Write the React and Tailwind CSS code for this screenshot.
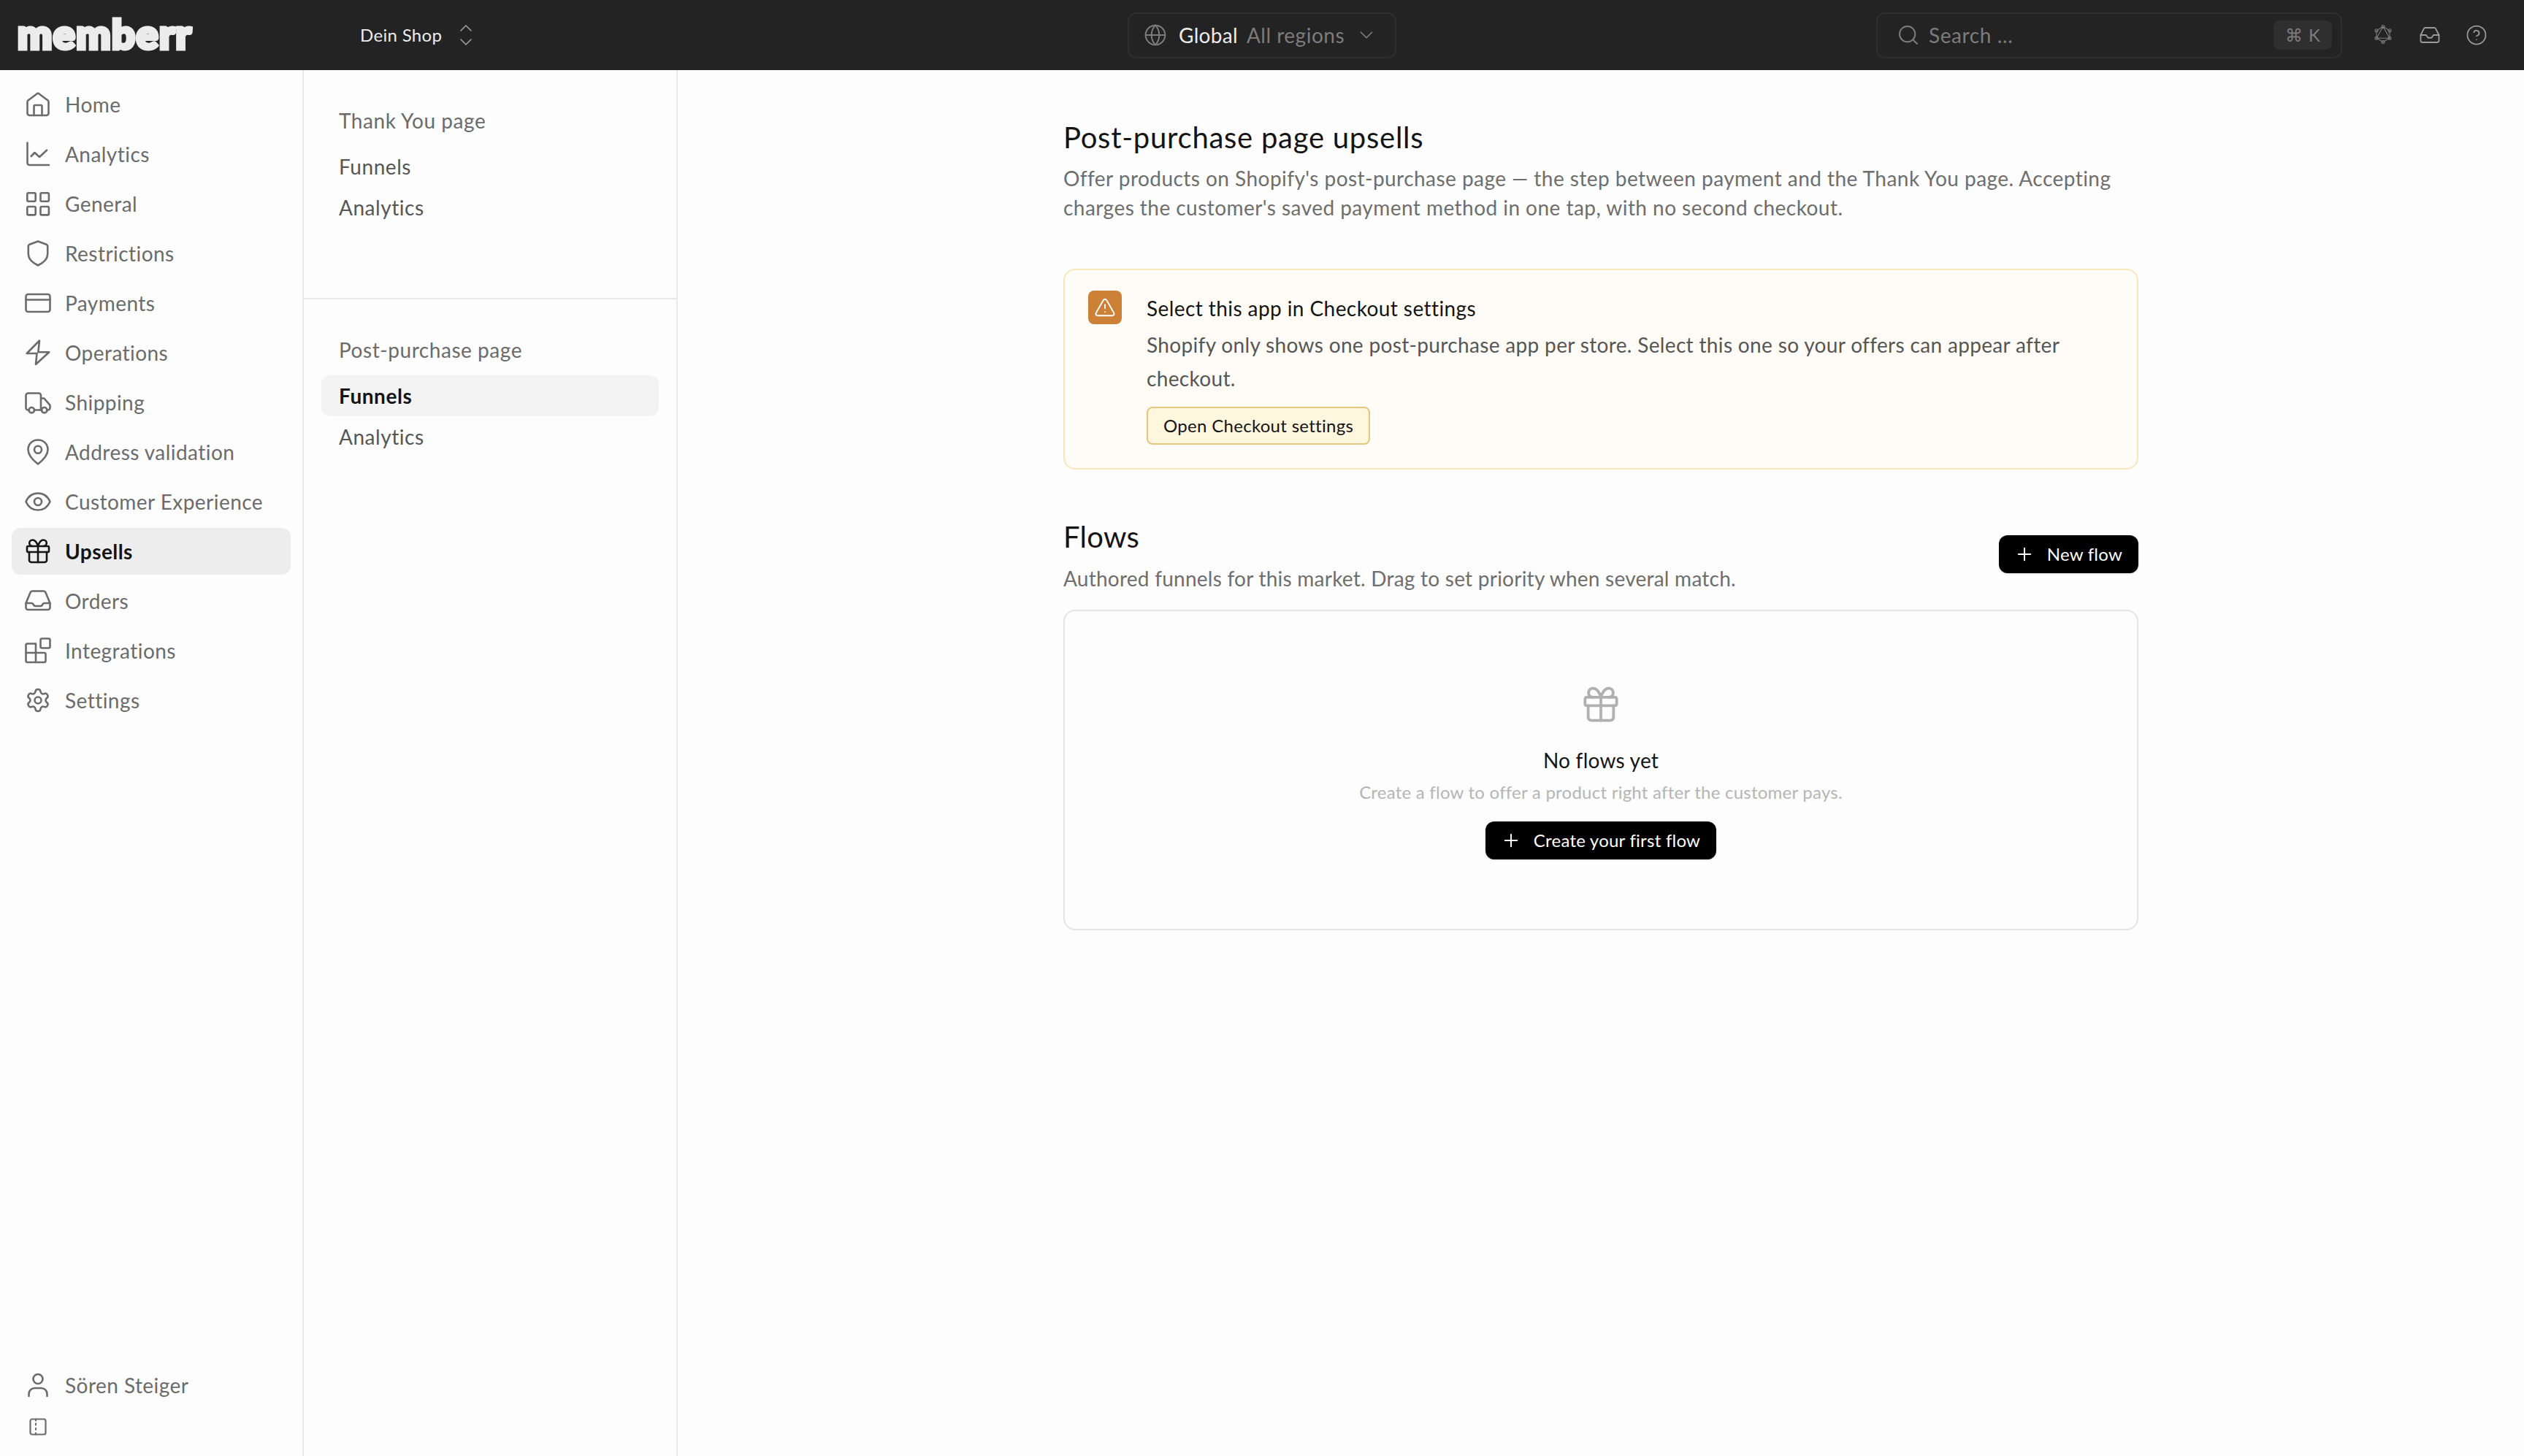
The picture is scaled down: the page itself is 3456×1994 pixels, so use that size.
import { ChevronDown, CircleHelp, Globe, Inbox, Plus, Search, Settings, TriangleAlert } from 'lucide-react';

const Svg = ({ children, className = 'w-9 h-9' }) => (
    <svg viewBox="0 0 36 36" fill="none" stroke="currentColor" strokeWidth="2.6" strokeLinecap="round" strokeLinejoin="round" className={`${className} shrink-0`}>
        {children}
    </svg>
);

const HomeIcon = () => (
    <Svg>
        <path d="M3.5 14.5c0-.8.4-1.5 1-2L16.5 3.5a2.5 2.5 0 0 1 3 0l12 9c.6.5 1 1.2 1 2V30a3 3 0 0 1-3 3H6.5a3 3 0 0 1-3-3z" />
        <path d="M12.5 33V20.5a1.5 1.5 0 0 1 1.5-1.5h8a1.5 1.5 0 0 1 1.5 1.5V33" />
    </Svg>
);
const ChartIcon = () => (
    <Svg>
        <path d="M3.5 2.5V30a3 3 0 0 0 3 3h26.5" />
        <path d="M8.7 21l4.8-5 6.5 6 10-9.3" />
    </Svg>
);
const GridIcon = () => (
    <Svg>
        <rect x="3.3" y="3.3" width="11.4" height="11.4" rx="1.6" />
        <rect x="21.5" y="3.3" width="11.4" height="11.4" rx="1.6" />
        <rect x="3.3" y="22" width="11.4" height="11.4" rx="1.6" />
        <rect x="21.5" y="22" width="11.4" height="11.4" rx="1.6" />
    </Svg>
);
const ShieldIcon = () => (
    <Svg>
        <path d="M18 1.5l11.5 4.2c1 .4 1.7 1.3 1.7 2.4V19c0 7-6.5 12.2-13.2 15.5C11.3 31.2 4.8 26 4.8 19V8.1c0-1.100.7-2 1.700-2.400z" />
    </Svg>
);
const CardIcon = () => (
    <Svg>
        <rect x="1.500" y="6" width="33" height="24" rx="3" />
        <path d="M1.500 13.500h33" />
    </Svg>
);
const BoltIcon = () => (
    <Svg>
        <path d="M20 1.500L2.700 19h13.800L15 34l18.300-16.700H18.300z" />
    </Svg>
);
const TruckIcon = () => (
    <Svg>
        <path d="M5.500 28.500h-1a3 3 0 0 1-3-3V8.500a3 3 0 0 1 3-3H19a3 3 0 0 1 3 3v20h-9" />
        <path d="M22 12.500h3.500a2 2 0 0 1 1.600.8l6.900 8c.3.4.5.9.5 1.400v2.800a3 3 0 0 1-3 3h-1" />
        <path d="M22 28.500h1" />
        <circle cx="9.300" cy="28.700" r="3.700" />
        <circle cx="26.700" cy="28.700" r="3.700" />
    </Svg>
);
const PinIcon = () => (
    <Svg>
        <path d="M18 1.500C10 1.500 4.500 7.500 4.500 14.500c0 7.500 7 15 13.500 20 6.500-5 13.500-12.500 13.500-20C31.500 7.500 26 1.500 18 1.500z" />
        <circle cx="18" cy="14.700" r="5" />
    </Svg>
);
const EyeIcon = () => (
    <Svg>
        <path d="M1.500 18C5 10 11 6.500 18 6.500S31 10 34.500 18C31 26 25 29.500 18 29.500S5 26 1.500 18z" />
        <circle cx="18" cy="18" r="5" />
    </Svg>
);
const GiftIcon = ({ className }) => (
    <Svg className={className}>
        <rect x="3" y="11" width="30" height="8" rx="1.600" />
        <path d="M6 19v11a3 3 0 0 0 3 3h18a3 3 0 0 0 3-3V19" />
        <path d="M18 11v22" />
        <path d="M18 11c-1.500-5-4-8.500-7.500-8.500a4.250 4.250 0 0 0 0 8.500" />
        <path d="M18 11c1.500-5 4-8.500 7.500-8.500a4.250 4.250 0 0 1 0 8.500" />
    </Svg>
);
const TrayIcon = () => (
    <Svg>
        <path d="M1.500 21L7.500 6.500a3 3 0 0 1 2.700-2h15.600a3 3 0 0 1 2.700 2L34.500 21v6a3 3 0 0 1-3 3h-27a3 3 0 0 1-3-3z" />
        <path d="M1.500 21H9c1 0 1.800.5 2.300 1.300l1 1.400c.5.8 1.300 1.300 2.300 1.300h6.800c1 0 1.800-.5 2.300-1.300l1-1.400c.5-.8 1.300-1.300 2.300-1.300h7.500" />
    </Svg>
);
const BlocksIcon = () => (
    <Svg>
        <rect x="21.500" y="1.500" width="13" height="13" rx="2" />
        <path d="M15 8.500H3.500a2 2 0 0 0-2 2V32a2 2 0 0 0 2 2h23a2 2 0 0 0 2-2V23a2 2 0 0 0-2-2H15z" />
        <path d="M1.500 21H15v13" />
    </Svg>
);
const GearIcon = () => <Settings size={36} strokeWidth={1.7} className="shrink-0" />;
const UserIcon = () => (
    <Svg>
        <circle cx="18" cy="9.500" r="6.500" />
        <path d="M5.500 33v-3c0-4.500 3.500-8 8-8h9c4.500 0 8 3.500 8 8v3" />
    </Svg>
);
const PanelIcon = () => (
    <svg viewBox="0 0 24 24" fill="none" stroke="currentColor" strokeWidth="2.200" strokeLinecap="round" strokeLinejoin="round" className="w-6 h-6 shrink-0">
        <rect x="1.500" y="1.500" width="21" height="21" rx="2.500" />
        <path d="M9 1.500v2M9 7.500v2M9 14v2M9 20.500v2" />
    </svg>
);
const GraphIcon = () => (
    <svg viewBox="0 0 24 28" fill="none" stroke="currentColor" strokeWidth="1.100" className="w-6 h-7">
        <path d="M12 3.500L21 8.700v10.600L12 24.500 3 19.300V8.700z" />
        <path d="M12 3.500L21 19.300H3z" />
        <circle cx="12" cy="3.500" r="2" />
        <circle cx="21" cy="8.700" r="2" />
        <circle cx="21" cy="19.300" r="2" />
        <circle cx="12" cy="24.500" r="2" />
        <circle cx="3" cy="19.300" r="2" />
        <circle cx="3" cy="8.700" r="2" />
    </svg>
);
const UpDownIcon = () => (
    <svg viewBox="0 0 18 30" fill="none" stroke="currentColor" strokeWidth="1.600" strokeLinecap="round" strokeLinejoin="round" className="w-[18px] h-[30px]">
        <path d="M2 9l7-7 7 7" />
        <path d="M2 21l7 7 7-7" />
    </svg>
);

const NAV_ITEMS = [
    { icon: HomeIcon, label: 'Home' },
    { icon: ChartIcon, label: 'Analytics' },
    { icon: GridIcon, label: 'General' },
    { icon: ShieldIcon, label: 'Restrictions' },
    { icon: CardIcon, label: 'Payments' },
    { icon: BoltIcon, label: 'Operations' },
    { icon: TruckIcon, label: 'Shipping' },
    { icon: PinIcon, label: 'Address validation' },
    { icon: EyeIcon, label: 'Customer Experience' },
    { icon: GiftIcon, label: 'Upsells', active: true },
    { icon: TrayIcon, label: 'Orders' },
    { icon: BlocksIcon, label: 'Integrations' },
    { icon: GearIcon, label: 'Settings' },
];

function TopBar() {
    return (
        <header className="h-24 shrink-0 bg-[#232323] flex items-center pl-6">
            <div className="w-[469px] shrink-0">
                <span className="block w-fit text-[#ececec] text-[56px] leading-none font-black tracking-[1.5px] -mt-1 [-webkit-text-stroke:5px_#ececec]">memberr</span>
            </div>
            <div className="w-[1051px] shrink-0 flex items-center gap-[24px] text-[24px] text-[#ececec]">
                <span>Dein Shop</span>
                <span className="text-[#a0a0a0] flex"><UpDownIcon /></span>
            </div>
            <div className="w-[368px] h-[63px] shrink-0 rounded-xl border-2 border-[#2e2e2e] flex items-center pl-[20px] text-[28px]">
                <Globe size={32} strokeWidth={1.5} className="text-[#7c7c7c] shrink-0" />
                <span className="ml-[16px] text-[#ececec]">Global</span>
                <span className="ml-[12px] tracking-[0.5px] text-[#7c7c7c]">All regions</span>
                <ChevronDown size={30} strokeWidth={1.4} className="ml-[15px] text-[#7c7c7c]" />
            </div>
            <div className="ml-[657px] w-[638px] h-[63px] shrink-0 rounded-xl border-2 border-[#2e2e2e] flex items-center pl-[26px] pr-3 text-[28px] text-[#7c7c7c]">
                <Search size={32} strokeWidth={1.5} className="shrink-0" />
                <span className="ml-[12px] tracking-[0.6px]">Search ...</span>
                <span className="ml-auto w-[80px] h-10 rounded-lg bg-[#2f2f2f] flex items-center justify-center gap-2 text-[24px]">
                    <span>⌘</span>
                    <span>K</span>
                </span>
            </div>
            <div className="ml-6 flex text-[#9a9a9a]">
                <div className="w-16 flex justify-center text-[#7c7c7c]"><GraphIcon /></div>
                <div className="w-16 flex justify-center"><Inbox size={30} strokeWidth={1.5} /></div>
                <div className="w-16 flex justify-center"><CircleHelp size={30} strokeWidth={1.4} /></div>
            </div>
        </header>
    );
}

function Sidebar() {
    return (
        <aside className="w-[416px] shrink-0 border-r-2 border-[#e9e9e9] flex flex-col pt-[15px] pb-[15px] px-4 text-[28px] tracking-[0.45px] text-[#6b6b6b]">
            <nav className="flex flex-col gap-1">
                {NAV_ITEMS.map((item) => {
                    const Icon = item.icon;
                    return (
                        <a key={item.label} className={`h-16 rounded-xl flex items-center gap-[19px] pl-[18px] ${item.active ? 'bg-[#ededed] text-[#141414] font-bold' : ''}`}>
                            <Icon />
                            <span>{item.label}</span>
                        </a>
                    );
                })}
            </nav>
            <div className="mt-auto">
                <div className="h-16 flex items-center gap-[19px] pl-[18px]">
                    <UserIcon />
                    <span>Sören Steiger</span>
                </div>
                <div className="h-[50px] flex items-center pl-6">
                    <PanelIcon />
                </div>
            </div>
        </aside>
    );
}

function SubNavSection({ title, items, className }) {
    return (
        <div className={`px-6 pt-[49px] ${className}`}>
            <div className="h-10 px-6 mb-[15px] flex items-center text-[#6b6b6b]">{title}</div>
            {items.map((item) => (
                <div key={item.label} className={`h-14 px-6 rounded-xl flex items-center ${item.active ? 'bg-[#f3f3f3] text-[#141414] font-bold' : 'text-[#565656]'}`}>
                    {item.label}
                </div>
            ))}
        </div>
    );
}

function SubNav() {
    return (
        <aside className="w-[512px] shrink-0 border-r-2 border-[#e9e9e9] text-[28px] tracking-[0.55px]">
            <SubNavSection title="Thank You page" className="h-[314px] border-b-2 border-[#e9e9e9]" items={[{ label: 'Funnels' }, { label: 'Analytics' }]} />
            <SubNavSection title="Post-purchase page" items={[{ label: 'Funnels', active: true }, { label: 'Analytics' }]} />
        </aside>
    );
}

function BlackButton({ children }) {
    return (
        <button className="h-[52px] pl-[21px] pr-[22px] rounded-xl bg-black text-white text-[24px] tracking-[0.24px] flex items-center gap-[17px] shadow-sm">
            <Plus size={28} strokeWidth={1.700} />
            {children}
        </button>
    );
}

function Main() {
    return (
        <main className="flex-1 min-w-0 flex justify-center">
            <div className="w-[1472px] pt-[68px]">
                <h1 className="text-[40px] leading-[48px] tracking-[0.74px] text-[#141414]">Post-purchase page upsells</h1>
                <p className="mt-3 text-[28px] leading-10 tracking-[0.455px] text-[#6e6e6e]">
                    Offer products on Shopify's post-purchase page — the step between payment and the Thank You page. Accepting charges the customer's saved payment method in one tap, with no second checkout.
                </p>

                {/* Checkout warning */}
                <div className="mt-[64px] h-[275px] rounded-2xl border-2 border-[#f7e6b8] bg-[#fffcf7] flex gap-[34px] pl-8 pr-8 pt-7">
                    <div className="w-[46px] h-[46px] shrink-0 rounded-lg bg-[#cd8136] flex items-center justify-center text-white">
                        <TriangleAlert size={30} strokeWidth={1.500} />
                    </div>
                    <div className="min-w-0 pt-[4px]">
                        <h3 className="text-[28px] leading-10 tracking-[0.42px] text-[#141414]">Select this app in Checkout settings</h3>
                        <p className="mt-[7px] text-[28px] leading-[46px] tracking-[0.34px] text-[#565656]">
                            Shopify only shows one post-purchase app per store. Select this one so your offers can appear after checkout.
                        </p>
                        <button className="mt-[16px] h-[52px] px-[21px] rounded-lg border-2 border-[#e6c67f] bg-[#fef6dd] text-[24px] tracking-[0.3px] text-[#141414] flex items-center">Open Checkout settings</button>
                    </div>
                </div>

                {/* Flows */}
                <div className="mt-[68px] flex items-center justify-between">
                    <div>
                        <h2 className="text-[40px] leading-[48px] text-[#141414]">Flows</h2>
                        <p className="mt-[13px] text-[28px] leading-10 tracking-[0.24px] text-[#6e6e6e]">Authored funnels for this market. Drag to set priority when several match.</p>
                    </div>
                    <div className="mb-[6px]"><BlackButton>New flow</BlackButton></div>
                </div>

                <div className="mt-[23px] h-[439px] rounded-2xl border-2 border-[#e4e4e4] flex flex-col items-center pt-[102px]">
                    <span className="text-[#b0b0b0]"><GiftIcon className="w-[52px] h-[52px]" /></span>
                    <h3 className="mt-[30px] text-[28px] leading-10 tracking-[0.24px] text-[#141414]">No flows yet</h3>
                    <p className="mt-2 text-[24px] leading-8 tracking-[0.24px] text-[#b5b5b5]">Create a flow to offer a product right after the customer pays.</p>
                    <div className="mt-[24px]"><BlackButton>Create your first flow</BlackButton></div>
                </div>
            </div>
        </main>
    );
}

export default function App() {
    return (
        <div className="h-screen flex flex-col bg-[#fdfdfd] overflow-hidden tracking-[0.32px] font-['Lato','Noto_Sans',sans-serif]">
            <TopBar />
            <div className="flex-1 min-h-0 flex">
                <Sidebar />
                <SubNav />
                <Main />
            </div>
        </div>
    );
}
